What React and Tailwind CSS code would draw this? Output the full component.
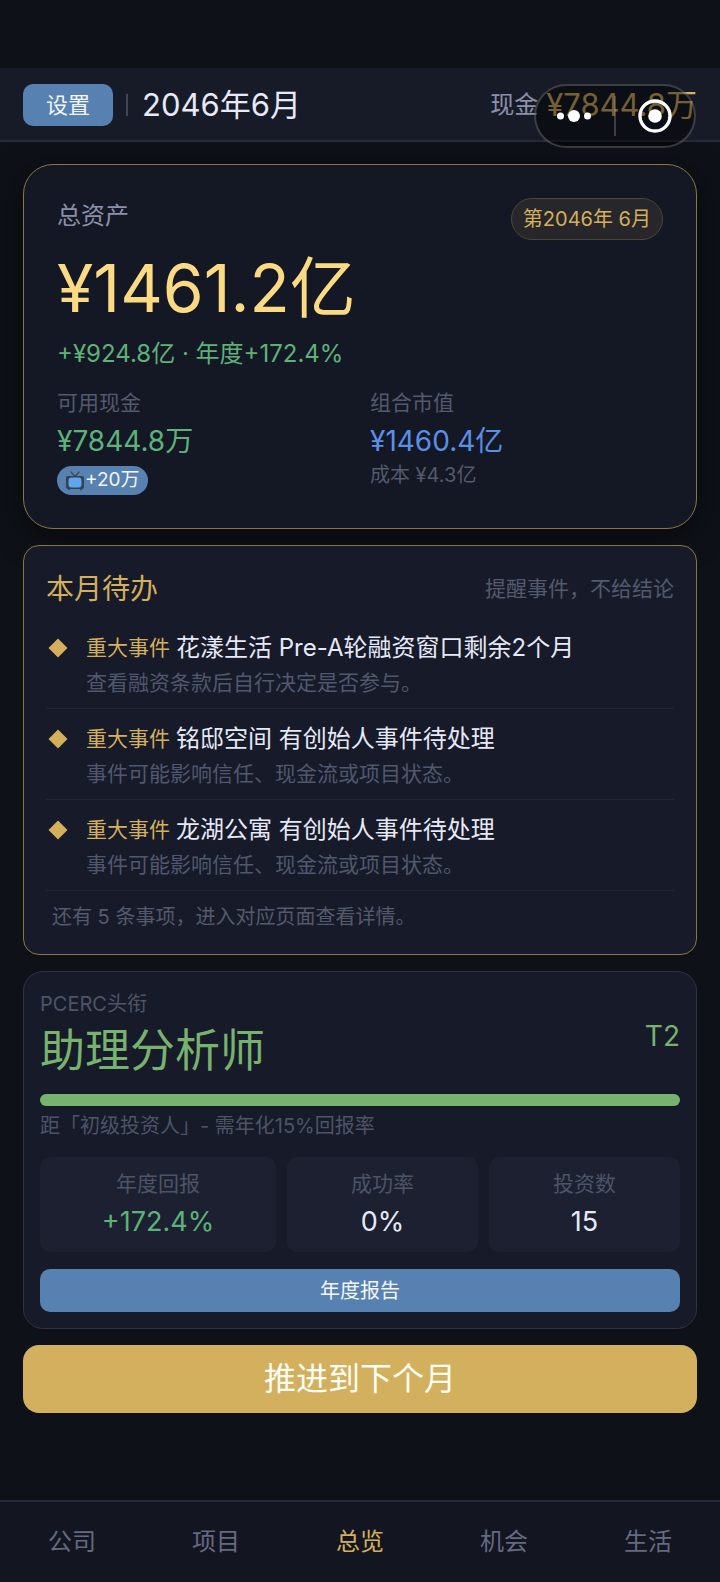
import React from 'react';

const todos = [
  {
    id: 1,
    tag: '重大事件',
    title: '花漾生活 Pre-A轮融资窗口剩余2个月',
    desc: '查看融资条款后自行决定是否参与。',
  },
  {
    id: 2,
    tag: '重大事件',
    title: '铭邸空间 有创始人事件待处理',
    desc: '事件可能影响信任、现金流或项目状态。',
  },
  {
    id: 3,
    tag: '重大事件',
    title: '龙湖公寓 有创始人事件待处理',
    desc: '事件可能影响信任、现金流或项目状态。',
  },
];

const tabs = ['公司', '项目', '总览', '机会', '生活'];

const TvIcon = () => (
  <svg width="20" height="20" viewBox="0 0 20 20" fill="none" aria-hidden="true">
    <path d="M6 1l4 4.5L14 1" stroke="#3b4a5c" strokeWidth="1.2" strokeLinecap="round" />
    <rect x="1" y="5" width="18" height="13" rx="2" fill="#37424f" />
    <rect x="3.5" y="6.5" width="13" height="10" rx="3" fill="#5ea6ee" />
    <path d="M4 18v1.2M16 18v1.2" stroke="#37424f" strokeWidth="1.6" />
  </svg>
);

const Diamond = () => (
  <svg width="20" height="20" viewBox="0 0 20 20" aria-hidden="true">
    <path d="M10 .5l9.5 9.5-9.5 9.5L.5 10z" fill="#d4b05c" />
  </svg>
);

// Floating mini-program capsule, sits on top of the header
const Capsule = () => (
  <div className="absolute right-6 top-4 flex h-16 w-[162px] items-center rounded-full border-2 border-white/20 bg-black/45">
    <button aria-label="更多" className="flex h-full flex-1 items-center justify-center">
      <svg width="36" height="14" viewBox="0 0 36 14" fill="#fff">
        <circle cx="3.5" cy="7" r="3.5" />
        <circle cx="17" cy="7" r="6" />
        <circle cx="30.5" cy="7" r="3.5" />
      </svg>
    </button>
    <span className="h-10 w-0.5 bg-white/20" />
    <button aria-label="关闭" className="flex h-full flex-1 items-center justify-center">
      <svg width="34" height="34" viewBox="0 0 34 34">
        <circle cx="17" cy="17" r="15" fill="none" stroke="#fff" strokeWidth="3.4" />
        <circle cx="17" cy="17" r="6.8" fill="#fff" />
      </svg>
    </button>
  </div>
);

const Header = () => (
  <header className="relative mt-[68px] flex h-[74px] items-center border-b-2 border-[#272a3b] bg-[#171a27] px-[23px] pt-0.5">
    <button className="h-[42px] rounded-[10px] bg-[#5781b1] px-[23px] text-[22px] text-[#f4f6fb]">设置</button>
    <span className="ml-[13px] h-[22px] w-0.5 bg-[#41465a]" />
    <h1 className="ml-3.5 text-[31px] text-[#e6e9f8]">2046年6月</h1>
    <div className="ml-auto flex items-center gap-2">
      <span className="text-2xl text-[#8a91a8]">现金</span>
      <span className="text-[31px] text-[#d4b05c]">¥7844.8万</span>
    </div>
    <Capsule />
  </header>
);

const AssetCard = () => (
  <section className="rounded-[30px] border border-[#8c7640] bg-[#141724] px-[33px] py-[33px] shadow-[0_8px_32px_rgba(0,0,0,0.5)]">
    <div className="flex items-start justify-between">
      <h2 className="text-2xl leading-9 text-[#8a91a8]">总资产</h2>
      <span className="flex h-[42px] items-center rounded-full border border-[#4d4634] bg-[#26262b] px-[11px] text-[20px] text-[#d4b05c]">
        第2046年 6月
      </span>
    </div>
    <p className="mt-1.5 text-[66px] leading-[84px] text-[#fbda84]">¥1461.2亿</p>
    <p className="mt-1.5 text-2xl leading-9 text-[#5db27a]">+¥924.8亿 · 年度+172.4%</p>
    <div className="mt-4 grid grid-cols-2 gap-5">
      <div>
        <p className="text-[21px] leading-[30px] text-[#535a6e]">可用现金</p>
        <p className="mt-[3px] text-[28px] leading-10 text-[#5db27a]">¥7844.8万</p>
        <span className="mt-[5px] flex h-[29px] w-fit items-center rounded-full bg-[#5781b1] px-2 text-[19px] text-[#f4f6fb]">
          <TvIcon />
          +20万
        </span>
      </div>
      <div>
        <p className="text-[21px] leading-[30px] text-[#535a6e]">组合市值</p>
        <p className="mt-[3px] text-[28px] leading-10 text-[#5a8fe6]">¥1460.4亿</p>
        <p className="text-[20px] leading-7 text-[#535a6e]">成本 ¥4.3亿</p>
      </div>
    </div>
  </section>
);

const TodoCard = () => (
  <section className="rounded-2xl border border-[#8c7640] bg-[#171a28] px-[22px] pb-[23px] pt-[23px]">
    <div className="flex items-center justify-between">
      <h2 className="text-[28px] leading-10 text-[#d4b05c]">本月待办</h2>
      <span className="text-[21px] text-[#535a6e]">提醒事件，不给结论</span>
    </div>
    <ul className="mt-[9px]">
      {todos.map((todo) => (
        <li key={todo.id} className="flex border-b border-[#222533] pb-[11px] pt-3">
          <span className="ml-0.5 flex h-9 w-[38px] items-center">
            <Diamond />
          </span>
          <div>
            <div className="flex items-center gap-1.5">
              <span className="text-[21px] leading-9 text-[#d4b05c]">{todo.tag}</span>
              <span className="text-2xl leading-9 text-[#e6e9f8]">{todo.title}</span>
            </div>
            <p className="mt-[3px] text-[21px] leading-7 text-[#4f586f]">{todo.desc}</p>
          </div>
        </li>
      ))}
    </ul>
    <p className="mt-3 px-1.5 text-[20px] leading-7 text-[#535a6e]">还有 5 条事项，进入对应页面查看详情。</p>
  </section>
);

const StatBox = ({ label, value, valueClass }) => (
  <div className="rounded-[10px] bg-[#1c2030] pb-3 pt-[13px] text-center">
    <p className="text-[21px] leading-7 text-[#4d5468]">{label}</p>
    <p className={`mt-1.5 text-[27px] leading-9 ${valueClass}`}>{value}</p>
  </div>
);

const RankCard = () => (
  <section className="rounded-[20px] border border-[#2f3344] bg-[#171a28] px-4 pb-4 pt-[18px]">
    <div className="flex items-center justify-between">
      <div>
        <p className="text-[20px] leading-7 text-[#4d5468]">PCERC头衔</p>
        <h2 className="mt-[3px] text-[45px] leading-[60px] text-[#77b26f]">助理分析师</h2>
      </div>
      <span className="text-[28px] leading-9 text-[#77b26f]">T2</span>
    </div>
    <div className="mt-[13px] h-3 rounded-full bg-[#77b26f]" />
    <p className="mt-1.5 text-[20px] leading-7 text-[#4d5468]">距「初级投资人」- 需年化15%回报率</p>
    <div className="mt-[17px] grid grid-cols-[236fr_191fr_191fr] gap-[11px]">
      <StatBox label="年度回报" value="+172.4%" valueClass="text-[#5db27a]" />
      <StatBox label="成功率" value="0%" valueClass="text-[#e6e9f8]" />
      <StatBox label="投资数" value="15" valueClass="text-[#e6e9f8]" />
    </div>
    <button className="mt-[17px] h-[43px] w-full rounded-[10px] bg-[#5781b1] text-[20px] text-[#f4f6fb]">
      年度报告
    </button>
  </section>
);

const TabBar = () => (
  <nav className="mt-auto grid h-[82px] grid-cols-5 border-t-2 border-[#272a3b] bg-[#131521]">
    {tabs.map((tab) => (
      <button key={tab} className={tab === '总览' ? 'text-2xl text-[#d4b05c]' : 'text-2xl text-[#646b80]'}>
        {tab}
      </button>
    ))}
  </nav>
);

const App = () => {
  return (
    <div className="flex min-h-screen flex-col bg-[#0e1118] font-['Inter','Noto_Sans_CJK_SC',sans-serif]">
      <Header />
      <main className="flex flex-col gap-4 px-[23px] pb-8 pt-[22px]">
        <AssetCard />
        <TodoCard />
        <RankCard />
        <button className="h-[68px] rounded-2xl bg-[#d2b05d] text-[32px] text-[#fffdf5]">推进到下个月</button>
      </main>
      <TabBar />
    </div>
  );
};

export default App;
